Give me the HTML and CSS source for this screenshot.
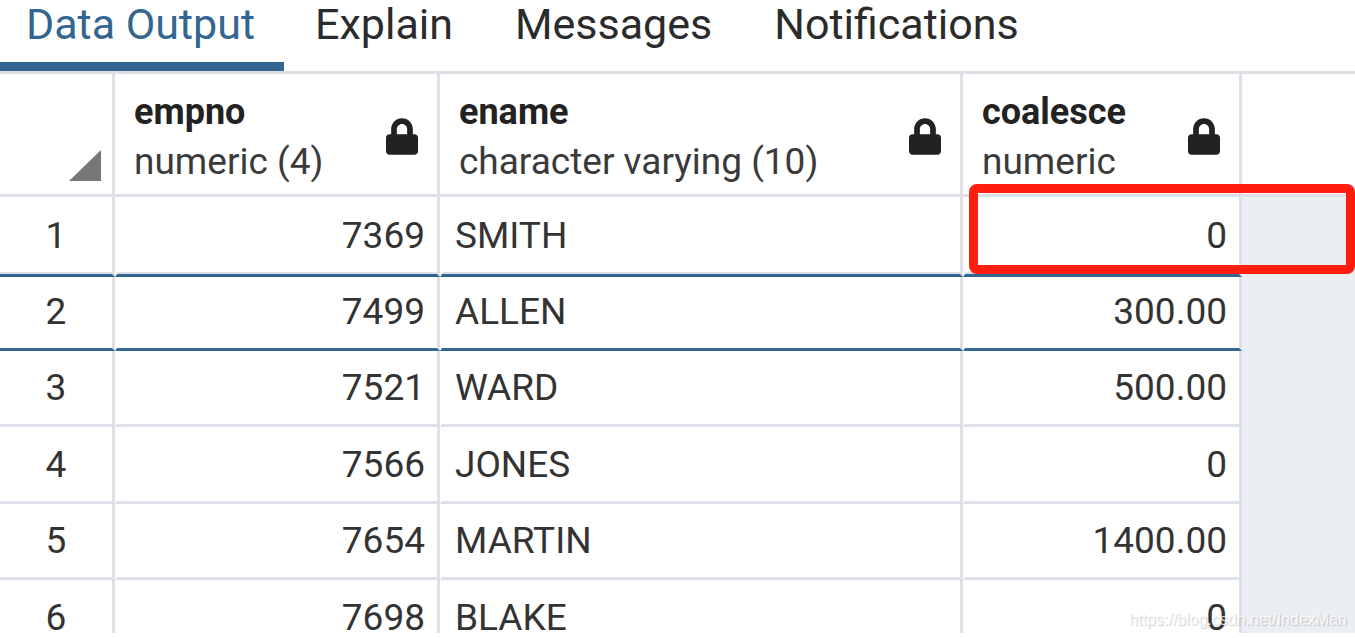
FILE: index.html
```html
<!DOCTYPE html>
<html lang="en">
<head>
    <meta charset="UTF-8" />
    <meta name="viewport" content="width=device-width, initial-scale=1" />
    <title>Data Output</title>
    <link rel="stylesheet" href="styles.css">
</head>
<body>
    <svg class="symbols" aria-hidden="true">
        <symbol id="lock" viewBox="0 0 448 512">
            <path d="M400 224h-24v-72C376 68.200 307.800 0 224 0S72 68.200 72 152v72H48c-26.500 0-48 21.500-48 48v192c0 26.500 21.500 48 48 48h352c26.500 0 48-21.500 48-48V272c0-26.500-21.500-48-48-48zm-104 0H152v-72c0-39.700 32.300-72 72-72s72 32.300 72 72v72z"/>
        </symbol>
    </svg>

    <div class="panel">
        <nav class="tabs">
            <a href="#" class="tab active">Data Output</a>
            <a href="#" class="tab">Explain</a>
            <a href="#" class="tab">Messages</a>
            <a href="#" class="tab">Notifications</a>
        </nav>

        <div class="grid">
            <table>
                <colgroup>
                    <col class="col-row">
                    <col class="col-empno">
                    <col class="col-ename">
                    <col class="col-coalesce">
                    <col>
                </colgroup>
                <thead>
                    <tr>
                        <th class="corner"><svg class="select-all" viewBox="0 0 32 31"><path d="M32 0v31H0z"/></svg></th>
                        <th>
                            <div class="column-head">
                                <div><p class="name">empno</p><p class="type">numeric (4)</p></div>
                                <svg class="lock"><use href="#lock"/></svg>
                            </div>
                        </th>
                        <th>
                            <div class="column-head">
                                <div><p class="name">ename</p><p class="type">character varying (10)</p></div>
                                <svg class="lock"><use href="#lock"/></svg>
                            </div>
                        </th>
                        <th>
                            <div class="column-head">
                                <div><p class="name">coalesce</p><p class="type">numeric</p></div>
                                <svg class="lock"><use href="#lock"/></svg>
                            </div>
                        </th>
                        <th class="rest"></th>
                    </tr>
                </thead>
                <tbody>
                    <tr class="before-selected"><td class="row-number">1</td><td class="number">7369</td><td>SMITH</td><td class="number">0</td><td class="rest"></td></tr>
                    <tr class="selected"><td class="row-number">2</td><td class="number">7499</td><td>ALLEN</td><td class="number">300.00</td><td class="rest"></td></tr>
                    <tr><td class="row-number">3</td><td class="number">7521</td><td>WARD</td><td class="number">500.00</td><td class="rest"></td></tr>
                    <tr><td class="row-number">4</td><td class="number">7566</td><td>JONES</td><td class="number">0</td><td class="rest"></td></tr>
                    <tr><td class="row-number">5</td><td class="number">7654</td><td>MARTIN</td><td class="number">1400.00</td><td class="rest"></td></tr>
                    <tr><td class="row-number">6</td><td class="number">7698</td><td>BLAKE</td><td class="number">0</td><td class="rest"></td></tr>
                </tbody>
            </table>
            <div class="highlight"></div>
        </div>
        <span class="watermark">https://blog.csdn.net/IndexMan</span>
    </div>
</body>
</html>
```
FILE: styles.css
```css
* {
    margin: 0;
    padding: 0;
    box-sizing: border-box;
}
body {
    height: 100vh;
    padding-bottom: 5px;
    overflow: hidden;
    font-family: Roboto, sans-serif;
    color: #222;
    background: #fff;
}
.symbols {
    display: none;
}
.panel {
    position: relative;
    height: 100%;
    overflow: hidden;
    display: flex;
    flex-direction: column;
}
.tabs {
    display: flex;
    flex: none;
    border-bottom: 3px solid #dde0e6;
}
.tab {
    height: 71px;
    padding: 0 31px;
    font-size: 43px;
    line-height: 48px;
    color: #2b2b2b;
    text-decoration: none;
}
.tab.active {
    padding: 0 29px 0 26px;
    color: #326690;
    border-bottom: 9px solid #326690;
}
.grid {
    position: relative;
    flex: 1;
    background: #ebeef3;
}
table {
    width: 100%;
    table-layout: fixed;
    border-collapse: separate;
    border-spacing: 0;
    font-size: 37px;
}
.col-row {
    width: 115px;
}
.col-empno {
    width: 325px;
}
.col-ename {
    width: 523px;
}
.col-coalesce {
    width: 279px;
}
th {
    height: 123px;
    padding: 5px 19px 0;
    font-weight: 400;
    text-align: left;
    background: #fff;
    border-right: 3px solid #dde0e6;
    border-bottom: 3px solid #dde0e6;
}
th.rest {
    border-right: none;
}
.corner {
    padding: 0 11px 13px 0;
    vertical-align: bottom;
}
.select-all {
    display: block;
    width: 32px;
    height: 31px;
    margin-left: auto;
    fill: #777;
}
.column-head {
    display: flex;
    align-items: center;
    justify-content: space-between;
    white-space: nowrap;
    line-height: 49px;
}
.name {
    font-weight: 700;
    font-size: 36px;
}
.type {
    color: #3a3a3a;
}
.lock {
    width: 32px;
    height: 37px;
    fill: #222;
}
td {
    height: 76px;
    padding: 0 12px 0 13px;
    color: #333;
    background: #fff;
    border-left: 2px solid #fff;
    border-right: 3px solid #dde0e6;
    border-bottom: 3px solid #dde0e6;
}
tr:nth-child(even) td {
    height: 77px;
}
.number {
    text-align: right;
}
.row-number {
    padding: 0;
    text-align: center;
    border-left: none;
}
td.rest {
    background: none;
    border: none;
}
.before-selected td {
    height: 80px;
    border-bottom-color: #326690;
    box-shadow: inset 0 -2px #dde0e6;
}
tr.selected:nth-child(even) td {
    height: 74px;
    padding-bottom: 3px;
    border-bottom-color: #326690;
}
tr td.rest {
    box-shadow: none;
}
.highlight {
    position: absolute;
    top: 110px;
    left: 969px;
    right: 0;
    height: 90px;
    border: 9px solid #ff1e10;
    border-radius: 8px;
}
.watermark {
    position: absolute;
    right: 8px;
    bottom: 4px;
    font-family: "Liberation Sans", Arial, sans-serif;
    font-size: 16px;
    line-height: 18px;
    color: rgba(255, 255, 255, 0.8);
    text-shadow: 1px 1px 1px rgba(0, 0, 0, 0.2);
}
```
